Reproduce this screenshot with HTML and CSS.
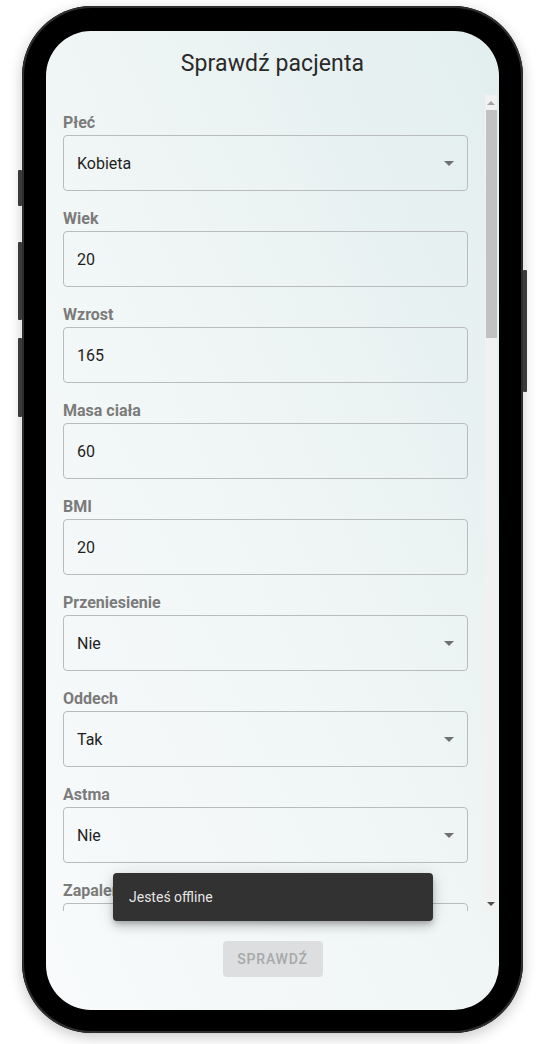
FILE: index.html
```html
<!DOCTYPE html>
<html lang="pl">
<head>
<meta charset="utf-8">
<title>Sprawdź pacjenta</title>
<link rel="stylesheet" href="styles.css">
</head>
<body>
<div class="phone">
  <span class="btn-side btn-l1"></span>
  <span class="btn-side btn-l2"></span>
  <span class="btn-side btn-l3"></span>
  <span class="btn-side btn-r1"></span>
  <div class="screen">
    <header class="header"><h1 class="title">Sprawdź pacjenta</h1></header>
    <main class="main">
      <div class="viewport">
        <div class="group"><div class="label">Płeć</div><div class="field select"><span>Kobieta</span><i class="caret"></i></div></div>
        <div class="group"><div class="label">Wiek</div><div class="field"><span>20</span></div></div>
        <div class="group"><div class="label">Wzrost</div><div class="field"><span>165</span></div></div>
        <div class="group"><div class="label">Masa ciała</div><div class="field"><span>60</span></div></div>
        <div class="group"><div class="label">BMI</div><div class="field"><span>20</span></div></div>
        <div class="group"><div class="label">Przeniesienie</div><div class="field select"><span>Nie</span><i class="caret"></i></div></div>
        <div class="group"><div class="label">Oddech</div><div class="field select"><span>Tak</span><i class="caret"></i></div></div>
        <div class="group"><div class="label">Astma</div><div class="field select"><span>Nie</span><i class="caret"></i></div></div>
        <div class="group"><div class="label">Zapalenie płuc</div><div class="field select"><span></span><i class="caret"></i></div></div>
      </div>
      <div class="scrollbar">
        <div class="sb-arrow"><i class="sb-up"></i></div>
        <div class="sb-track"><div class="sb-thumb"></div></div>
        <div class="sb-arrow"><i class="sb-down"></i></div>
      </div>
    </main>
    <footer class="footer"><button class="submit" disabled>SPRAWDŹ</button></footer>
    <div class="snackbar">Jesteś offline</div>
  </div>
</div>
</body>
</html>
```
FILE: styles.css
```css
html, body {
  margin: 0;
  padding: 0;
  background: #ffffff;
}
body {
  font-family: Roboto, "Liberation Sans", sans-serif;
  width: 538px;
  height: 1044px;
  overflow: hidden;
}
.phone {
  position: relative;
  box-sizing: border-box;
  margin: 6px 0 0 22px;
  width: 501px;
  height: 1027px;
  padding: 25px 24px 23px 24px;
  background: #000;
  border-radius: 70px;
  box-shadow: inset 0 0 0 2px #2e2e2e, 0 4px 14px rgba(0, 0, 0, 0.22);
}
.btn-side {
  position: absolute;
  width: 4px;
  background: #3a3a3a;
  border-radius: 1px;
}
.btn-l1 { left: -4px; top: 164px; height: 36px; }
.btn-l2 { left: -4px; top: 236px; height: 78px; }
.btn-l3 { left: -4px; top: 332px; height: 79px; }
.btn-r1 { right: -4px; top: 264px; height: 122px; }

.screen {
  position: relative;
  height: 979px;
  border-radius: 45px;
  overflow: hidden;
  background: linear-gradient(to bottom left, #e2eeee 0%, #f1f6f6 55%, #f8fafb 100%);
  display: flex;
  flex-direction: column;
}
.header {
  height: 64px;
  display: flex;
  align-items: center;
  justify-content: center;
  flex: none;
}
.title {
  margin: 0;
  font-size: 23px;
  font-weight: 400;
  color: #2a2a2a;
  letter-spacing: 0.1px;
}
.main {
  height: 816px;
  flex: none;
  display: flex;
}
.viewport {
  flex: 1;
  overflow: hidden;
  padding: 18px 17px 0 17px;
}
.group {
  margin-bottom: 18px;
}
.label {
  font-size: 16px;
  line-height: 19px;
  font-weight: 700;
  color: #7b7b7b;
  margin-bottom: 3px;
}
.field {
  box-sizing: border-box;
  height: 56px;
  border: 1px solid #b9bcbc;
  border-radius: 4px;
  display: flex;
  align-items: center;
  justify-content: space-between;
  padding: 0 13px 0 13px;
  font-size: 16px;
  color: #1f1f1f;
}
.caret {
  width: 0;
  height: 0;
  border-left: 5px solid transparent;
  border-right: 5px solid transparent;
  border-top: 5px solid #707070;
  margin-top: 1px;
}
.scrollbar {
  width: 12px;
  margin-right: 2px;
  background: #f1f1f1;
  display: flex;
  flex-direction: column;
}
.sb-arrow {
  height: 15px;
  display: flex;
  align-items: center;
  justify-content: center;
  flex: none;
}
.sb-up, .sb-down {
  width: 0;
  height: 0;
  border-left: 4px solid transparent;
  border-right: 4px solid transparent;
}
.sb-up { border-bottom: 4px solid #a3a3a3; }
.sb-down { border-top: 4px solid #505050; }
.sb-track {
  flex: 1;
  padding-left: 1px;
}
.sb-thumb {
  height: 228px;
  background: #c1c1c1;
}
.footer {
  flex: 1;
  display: flex;
  justify-content: center;
  align-items: flex-start;
  padding-top: 30px;
}
.submit {
  width: 100px;
  height: 36px;
  border: none;
  border-radius: 4px;
  background: #dcdedf;
  color: #a7a9aa;
  font-family: Roboto, "Liberation Sans", sans-serif;
  font-size: 14px;
  font-weight: 500;
  letter-spacing: 0.8px;
  padding: 0;
}
.snackbar {
  position: absolute;
  left: 67px;
  top: 842px;
  width: 320px;
  height: 48px;
  box-sizing: border-box;
  padding: 0 16px;
  display: flex;
  align-items: center;
  background: #323232;
  color: rgba(255, 255, 255, 0.9);
  font-size: 14px;
  border-radius: 4px;
  box-shadow: 0 3px 5px -1px rgba(0,0,0,.2), 0 6px 10px 0 rgba(0,0,0,.14), 0 1px 18px 0 rgba(0,0,0,.12);
}
```
